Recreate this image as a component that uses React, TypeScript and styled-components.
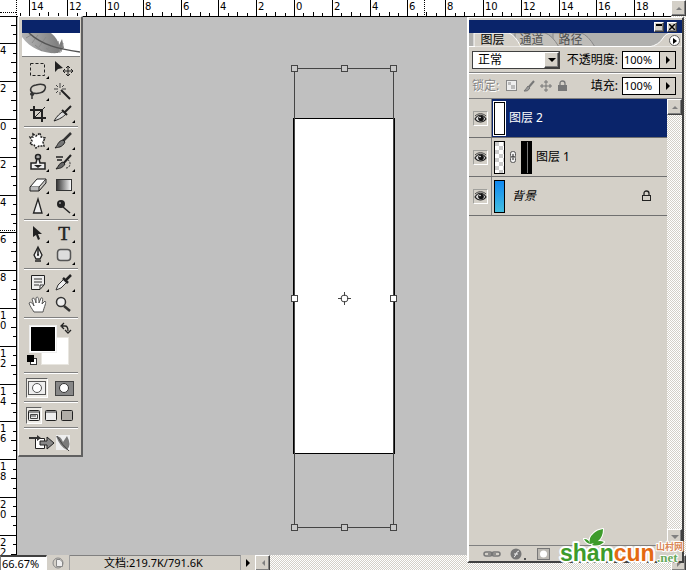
import React from "react";
import styled, { createGlobalStyle, css } from "styled-components";

const FACE = "#d4d0c8";
const NAVY = "#0a246a";
const FONT = `"Noto Sans", "Noto Sans CJK SC", sans-serif`;
const SCALE_FONT = `"DejaVu Sans", sans-serif`;
const UNIT = 18.9;

const GlobalStyle = createGlobalStyle`
  *, *::before, *::after { box-sizing: border-box; }
  html, body, #root { height: 100%; margin: 0; }
  body { background: #c0c0c0; color: #000; font: 11px/14px ${FONT}; overflow: hidden; }
  button, input, select { font: inherit; color: inherit; margin: 0; padding: 0; }
  svg { display: block; flex: none; }
`;

const dither = css`
  background: repeating-conic-gradient(#fff 0 25%, ${FACE} 0 50%) 0 0 / 2px 2px;
`;
const raised = css`
  background: ${FACE};
  border: 1px solid;
  border-color: #fff #404040 #404040 #fff;
  box-shadow: inset -1px -1px 0 #808080;
`;

/* ---------- window frame ---------- */

const Window = styled.div`
  position: relative;
  display: flex;
  flex-direction: column;
  height: 100vh;
  overflow: hidden;
`;
const Workspace = styled.div`
  flex: 1;
  min-height: 0;
  display: flex;
`;
const View = styled.div`
  flex: 1;
  min-width: 0;
  display: grid;
  grid-template: 17px minmax(0, 1fr) / 17px minmax(0, 1fr);
`;
const Corner = styled.div`
  position: relative;
  background: #fff;
  border-right: 1px dotted #000;
  border-bottom: 1px solid #000;
  &::after {
    content: "";
    position: absolute;
    left: 0;
    right: 0;
    top: 12px;
    border-top: 1px dotted #000;
  }
`;
const TopRuler = styled.div`
  background: #fff;
  border-bottom: 1px solid #000;
  overflow: hidden;
`;
const SideRuler = styled.div`
  background: #fff;
  border-right: 1px solid #000;
  overflow: hidden;
`;
const Canvas = styled.main`
  position: relative;
  background: #c0c0c0;
  overflow: hidden;
`;
const Document = styled.div`
  position: absolute;
  left: 276px;
  top: 101px;
  width: 102px;
  height: 336px;
  background: #fff;
  border: 1px solid #000;
`;
const TransformBox = styled.svg`
  position: absolute;
  left: 273px;
  top: 47px;
`;
const ScrollColumn = styled.div`
  width: 15px;
  ${dither}
`;
const ScrollButton = styled.button`
  ${raised}
  display: flex;
  flex: none;
  align-items: center;
  justify-content: center;
  width: 15px;
  height: 16px;
`;

/* ---------- status bar ---------- */

const StatusBar = styled.footer`
  display: flex;
  height: 15px;
  background: ${FACE};
`;
const ZoomInput = styled.input`
  flex: none;
  width: 47px;
  border: 1px solid #808080;
  border-right-color: #fff;
  border-top: 2px solid #404040;
  border-bottom: 0;
  background: #fff;
  padding-left: 1px;
`;
const StatusIcon = styled.div`
  display: flex;
  flex: none;
  align-items: center;
  justify-content: center;
  width: 23px;
  border-right: 1px solid #a0a0a0;
`;
const StatusText = styled.div`
  flex: none;
  width: 171px;
  padding-left: 34px;
  border-top: 1px solid #808080;
  border-right: 1px solid #a0a0a0;
  white-space: nowrap;
`;
const StatusArrow = styled.button`
  display: flex;
  flex: none;
  align-items: center;
  justify-content: center;
  width: 14px;
  border: 0;
  background: ${FACE};
`;
const ScrollTrack = styled.div`
  flex: 1;
  ${dither}
`;

/* ---------- toolbox ---------- */

const Toolbox = styled.aside`
  position: absolute;
  top: 16px;
  left: 18px;
  width: 65px;
  padding: 3px 1px 0 3px;
  background: ${FACE};
  border-style: solid;
  border-width: 1px 2px 2px 1px;
  border-color: #fff #606060 #606060 #fff;
`;
const ToolTitle = styled.div`
  height: 13px;
  background: ${NAVY};
`;
const Feather = styled.div`
  height: 24px;
  background: #fff;
  border-bottom: 1px solid #808080;
  overflow: hidden;
`;
const Group = styled.div`
  display: flex;
  flex-wrap: wrap;
  align-items: center;
  align-content: center;
  margin: 0 2px;
  padding: 2px 0 1px 1px;
  &:not(:last-child) {
    border-bottom: 1px solid #808080;
    box-shadow: 0 1px 0 #fff;
    margin-bottom: 1px;
  }
`;
const ToolButton = styled.button`
  width: 26px;
  height: 22px;
  border: 0;
  background: transparent;
`;
const SwatchGroup = styled(Group)`
  height: 54px;
`;
const ModeGroup = styled(Group)<{ $height: number }>`
  height: ${(p) => p.$height}px;
  justify-content: space-between;
  padding: 2px 3px 1px 2px;
`;
const ModeButton = styled.button<{ $active?: boolean; $small?: boolean }>`
  display: flex;
  align-items: center;
  justify-content: center;
  width: ${(p) => (p.$small ? 16 : 22)}px;
  height: ${(p) => (p.$small ? 17 : 20)}px;
  border: 1px solid;
  border-color: ${(p) => (p.$active ? "#606060 #fff #fff #606060" : "transparent")};
  background: ${(p) => (p.$active ? "#efede8" : "transparent")};
`;
const JumpButton = styled.button`
  height: 23px;
  width: 50px;
  padding-left: 4px;
  border: 0;
  background: transparent;
`;

/* ---------- layers panel ---------- */

const Panel = styled.aside`
  position: absolute;
  top: 17px;
  right: 2px;
  bottom: 7px;
  width: 217px;
  display: flex;
  flex-direction: column;
  background: ${FACE};
  border-style: solid;
  border-width: 1px 2px 2px 2px;
  border-color: #fff #404040 #404040 #fff;
`;
const PanelTitle = styled.header`
  display: flex;
  align-items: center;
  justify-content: flex-end;
  gap: 3px;
  height: 15px;
  padding-right: 5px;
  border-top: 2px solid ${FACE};
  background: ${NAVY};
`;
const CaptionButton = styled.button`
  ${raised}
  display: flex;
  align-items: center;
  justify-content: center;
  width: 10px;
  height: 10px;
`;
const Tabs = styled.nav`
  position: relative;
  height: 14px;
  background: #b0b0ae;
  overflow: hidden;
`;
const TabShapes = styled.svg`
  position: absolute;
  inset: 0;
  width: 100%;
`;
const TabRow = styled.div`
  position: relative;
  display: flex;
  gap: 14px;
  padding-left: 11px;
`;
const Tab = styled.button<{ $active?: boolean }>`
  width: 25px;
  height: 14px;
  border: 0;
  background: transparent;
  font-size: 12px;
  line-height: 14px;
  white-space: nowrap;
  color: ${(p) => (p.$active ? "#000" : "#505050")};
`;
const MenuButton = styled.button`
  display: flex;
  align-items: center;
  justify-content: center;
  width: 11px;
  height: 11px;
  margin: 2px 2px 0 auto;
  border: 1px solid #606060;
  border-radius: 50%;
  background: #fff;
`;
const OptionRow = styled.div`
  display: flex;
  align-items: center;
  height: 25px;
  padding: 0 6px 0 3px;
  font-size: 12px;
  & + & {
    height: 26px;
    border-top: 1px solid #808080;
    box-shadow: inset 0 1px 0 #fff;
  }
`;
const SelectWrap = styled.span`
  display: flex;
  width: 88px;
  height: 18px;
  border: 1px solid #404040;
  background: #fff;
`;
const BlendSelect = styled.select`
  flex: 1;
  min-width: 0;
  appearance: none;
  border: 0;
  background: transparent;
  padding-left: 5px;
  font-size: 12px;
  line-height: 16px;
`;
const DropArrow = styled.span`
  ${raised}
  display: flex;
  align-items: center;
  justify-content: center;
  width: 15px;
  pointer-events: none;
`;
const FieldLabel = styled.label`
  margin-left: auto;
  margin-right: 4px;
  white-space: nowrap;
`;
const LockLabel = styled.span`
  color: #858585;
  text-shadow: 1px 1px 0 #fff;
  margin-right: 7px;
`;
const LockIcons = styled.div`
  display: flex;
  gap: 5px;
`;
const LockButton = styled.button`
  width: 12px;
  height: 14px;
  border: 0;
  background: transparent;
`;
const Field = styled.span`
  display: flex;
  width: 54px;
  height: 18px;
  border: 1px solid #000;
`;
const PercentInput = styled.input`
  flex: 1;
  min-width: 0;
  border: 0;
  background: #fff;
  padding-left: 1px;
  font-size: 11px;
`;
const FieldArrow = styled.button`
  display: flex;
  align-items: center;
  justify-content: center;
  width: 16px;
  border: 0;
  border-left: 1px solid #000;
  background: ${FACE};
`;
const LayerArea = styled.div`
  flex: 1;
  min-height: 0;
  display: flex;
  border-top: 1px solid #808080;
`;
const LayerList = styled.ul`
  flex: 1;
  margin: 0;
  padding: 0;
  list-style: none;
`;
const LayerRow = styled.li<{ $selected?: boolean }>`
  display: flex;
  align-items: stretch;
  height: 39px;
  border-bottom: 1px solid #707070;
  background: ${(p) => (p.$selected ? NAVY : FACE)};
  color: ${(p) => (p.$selected ? "#fff" : "#000")};
`;
const EyeCell = styled.div`
  display: flex;
  align-items: center;
  justify-content: center;
  width: 23px;
  background: ${FACE};
  border-right: 1px solid #808080;
`;
const EyeButton = styled.button`
  display: flex;
  align-items: center;
  justify-content: center;
  width: 15px;
  height: 15px;
  border: 1px solid;
  border-color: #a0a09c #fff #fff #a0a09c;
  background: transparent;
`;
const LayerBody = styled.div`
  flex: 1;
  display: flex;
  align-items: center;
  gap: 4px;
  padding: 0 15px 0 2px;
`;
const fills = {
  white: "#fff",
  checker: "repeating-conic-gradient(#fff 0 25%, #ccc 0 50%) 0 0 / 8px 8px",
  mask: "linear-gradient(90deg, #000 5px, #777 5px 6px, #000 6px)",
  sky: "linear-gradient(#1088f0, #44bee0)",
};
const Thumb = styled.span<{ $fill: keyof typeof fills; $selected?: boolean }>`
  width: 11px;
  height: 33px;
  border: 1px solid #000;
  background: ${(p) => fills[p.$fill]};
  outline: ${(p) => (p.$selected ? "1px solid #fff" : "none")};
`;
const LayerName = styled.span<{ $italic?: boolean }>`
  flex: 1;
  padding-left: ${(p) => (p.$italic ? 3 : 0)}px;
  font-size: 12px;
  font-style: ${(p) => (p.$italic ? "italic" : "normal")};
`;
const PanelScroll = styled.div`
  display: flex;
  flex-direction: column;
  justify-content: space-between;
  width: 15px;
  ${dither}
`;
const PanelFooter = styled.footer`
  display: flex;
  align-items: center;
  gap: 11px;
  height: 16px;
  padding-left: 14px;
  border-top: 1px solid #808080;
`;
const FooterButton = styled.button`
  width: 16px;
  height: 14px;
  border: 0;
  background: transparent;
`;
const Watermark = styled.svg`
  position: absolute;
  right: 0;
  bottom: 2px;
`;

/* ---------- rulers ---------- */

const range = (from: number, to: number) =>
  Array.from({ length: to - from + 1 }, (_, i) => from + i);

/* One step is a quarter of a labelled division. */
function HorizontalScale() {
  const at = (step: number) => Math.round(277 + (step * UNIT) / 2);
  return (
    <svg width="1600" height="16" shapeRendering="crispEdges" fontSize="10" fontFamily={SCALE_FONT}>
      {range(-29, 120).map((s) => {
        const x = at(s);
        const major = s % 4 === 0;
        return (
          <g key={s}>
            <rect x={x} y={major ? 0 : s % 2 === 0 ? 12 : 13} width="1" height="16" />
            {major && <text x={x + 2} y="10">{Math.abs(s / 2)}</text>}
          </g>
        );
      })}
      <rect x="407" y="0" width="1" height="16" fill="#fff" />
      <path d="M407.500 0V16" stroke="#000" strokeDasharray="1 1" />
    </svg>
  );
}

function VerticalScale() {
  const at = (step: number) => Math.round(102 + (step * UNIT) / 2);
  return (
    <svg width="16" height="1200" shapeRendering="crispEdges" fontSize="10" fontFamily={SCALE_FONT}>
      {range(-10, 110).map((s) => {
        const y = at(s);
        const major = s % 4 === 0;
        return (
          <g key={s}>
            <rect x={major ? 0 : s % 2 === 0 ? 11 : 13} y={y} width="16" height="1" />
            {major &&
              String(Math.abs(s / 2))
                .split("")
                .map((d, i) => (
                  <text key={i} x="0" y={y + 11 + i * 10}>{d}</text>
                ))}
          </g>
        );
      })}
      <path d="M0 213.500H16" stroke="#000" strokeDasharray="1 1" />
    </svg>
  );
}

/* ---------- icons ---------- */

const Arrow = ({ dir = "right", color = "#000" }: { dir?: "right" | "left" | "up" | "down"; color?: string }) => {
  const d = {
    right: "M2 0L6 4L2 8Z",
    left: "M6 1L3 4L6 7Z",
    up: "M1 6L4 3L7 6Z",
    down: "M0 2L4 6L8 2Z",
  }[dir];
  return (
    <svg width="8" height="8"><path d={d} fill={color} /></svg>
  );
};

const toolGroups: { name: string; more?: boolean; art: React.ReactNode }[][] = [
  [
    { name: "矩形选框", more: true, art: <rect x="5.500" y="4.500" width="14" height="12" fill="none" stroke="#222" strokeDasharray="3 2" /> },
    { name: "移动", art: <><path d="M4 2V13L7 10L12 9Z" fill="#222" /><path d="M17 7V17M12 12H22M15 9L17 7L19 9M15 15L17 17L19 15M14 10L12 12L14 14M20 10L22 12L20 14" stroke="#222" fill="none" /></> },
    { name: "套索", more: true, art: <path d="M8 12C4 10 5 5 11 4C17 2 22 4 20 8C19 12 12 13 8 12C5 11 5 15 8 14C10 12 7 11 7 15V18" fill="none" stroke="#333" strokeWidth="1.500" /> },
    { name: "魔棒", art: <><path d="M10 9L19 18" stroke="#222" strokeWidth="2" /><path d="M9 2V7M9 11V14M3 8H7M11 8H15M5 4L7 6M13 4L11 6M5 12L7 10" stroke="#444" /></> },
    { name: "裁剪", art: <><path d="M9 3V15H21M5 7H17V19" fill="none" stroke="#222" strokeWidth="2" /><path d="M8 16L20 4" stroke="#222" /></> },
    { name: "切片", more: true, art: <><path d="M3 18C6 13 9 10 13 8L15 11C12 14 9 16 3 18Z" fill="#ddd" stroke="#222" /><path d="M11 7L16 12M14 9L20 3" stroke="#222" strokeWidth="2" /></> },
  ],
  [
    { name: "修补", more: true, art: <path d="M8 4L11 6L15 3L16 7L20 8L18 12L19 16L14 16L11 18L9 15L5 14L7 11L5 7L8 7Z" fill="#fff" stroke="#222" strokeWidth="1.500" strokeDasharray="2 1" /> },
    { name: "画笔", more: true, art: <><path d="M11 12L20 3" stroke="#333" strokeWidth="2.500" /><path d="M12 10L14 12C11 18 7 17 4 18C7 15 7 11 12 10Z" fill="#777" stroke="#222" /></> },
    { name: "图章", more: true, art: <><circle cx="13" cy="5" r="2.500" fill="#aaa" stroke="#222" strokeWidth="1.500" /><path d="M12 7H14L15 11H20V17H6V11H11Z" fill="#eee" stroke="#222" strokeWidth="1.500" /><path d="M9 13H17L13 16Z" fill="#222" /></> },
    { name: "历史画笔", more: true, art: <><path d="M11 13L20 3" stroke="#222" strokeWidth="2" /><path d="M5 5H12M6 8H11" stroke="#222" strokeWidth="1.500" /><path d="M12 10L14 12C11 17 8 16 5 17C8 14 8 11 12 10Z" fill="#666" stroke="#222" /><path d="M15 16C20 16 20 9 17 8" fill="none" stroke="#333" strokeDasharray="2 1" /></> },
    { name: "橡皮擦", more: true, art: <><path d="M5 13L12 5H21L14 13Z" fill="#fff" stroke="#222" /><path d="M5 13V17H14V13M14 17L21 9V5" fill="#bbb" stroke="#222" /></> },
    { name: "渐变", more: true, art: <><defs><linearGradient id="toolGradient"><stop stopColor="#333" /><stop offset="1" stopColor="#fff" /></linearGradient></defs><rect x="5.500" y="5.500" width="15" height="11" fill="url(#toolGradient)" stroke="#333" /></> },
    { name: "锐化", more: true, art: <path d="M13 3L17 17H8.500Z" fill="#eee" stroke="#222" strokeWidth="1.300" /> },
    { name: "减淡", more: true, art: <><path d="M12 11L19 17" stroke="#222" strokeWidth="1.500" /><circle cx="10" cy="8" r="4" fill="#222" /><circle cx="9" cy="7" r="1" fill="#999" /></> },
  ],
  [
    { name: "路径选择", more: true, art: <path d="M8 3V14L11 12L13 17L15 16L13 11H17Z" fill="#222" /> },
    { name: "文字", more: true, art: <text x="13" y="17" textAnchor="middle" fontFamily="Liberation Serif, serif" fontSize="19" stroke="#222" strokeWidth="0.500" fill="#222">T</text> },
    { name: "钢笔", more: true, art: <><path d="M13 2L17 10L15 14H11L9 10Z" fill="#eee" stroke="#222" strokeWidth="1.300" /><path d="M13 3V10M10 16H16" stroke="#222" strokeWidth="1.500" /><circle cx="13" cy="10" r="1" fill="#222" /></> },
    { name: "圆角矩形", more: true, art: <rect x="6.500" y="4.500" width="13" height="11" rx="3" fill="#ddd" stroke="#555" strokeWidth="1.500" /> },
  ],
  [
    { name: "注释", more: true, art: <><path d="M6.500 3.500H19.500V12.500L15 17.500H6.500Z" fill="#eee" stroke="#222" /><path d="M9 7H17M9 10H17M9 13H14M15 17V13H19" stroke="#333" fill="none" /></> },
    { name: "吸管", more: true, art: <><path d="M5 18L7 13L13 7L16 10L10 16Z" fill="#eee" stroke="#333" /><path d="M12 6L17 11M14 9L20 3" stroke="#222" strokeWidth="2.500" /></> },
    { name: "抓手", art: <path d="M9 18C7 15 5 12 4 9C6 7 8 10 9 12L7 5C8 3 10 4 11 9L11 4C12 2 14 3 14 9L16 4C18 3 18 5 17 10L20 7C22 8 19 13 18 18Z" fill="#fff" stroke="#555" /> },
    { name: "缩放", art: <><path d="M13 12L19 17" stroke="#333" strokeWidth="2.500" /><circle cx="10" cy="8" r="4.500" fill="#eee" stroke="#333" strokeWidth="1.500" /></> },
  ],
];

const FeatherArt = () => (
  <svg width="58" height="23">
    <defs><linearGradient id="feather"><stop stopColor="#b4b4b4" /><stop offset="1" stopColor="#777" /></linearGradient></defs>
    <path d="M0 0H29C34 4 36 8 37 12L40 6L42 15L36 20C25 21 9 17 0 4Z" fill="url(#feather)" />
    <path d="M4 5L9 2M10 10L16 2M17 14L24 4M25 17L31 8M30 20L24 15M20 18L13 12M36 8L38 20M41 10L39 19" stroke="#8a8a8a" />
    <path d="M7 0C20 12 36 16 58 19" fill="none" stroke="#555" strokeWidth="1.500" />
  </svg>
);

const Swatches = () => (
  <svg width="50" height="50" aria-label="前景色和背景色">
    <rect x="16.500" y="16.500" width="27" height="27" fill="#fff" stroke="#e8e6e0" />
    <rect x="4.500" y="4.500" width="27" height="27" fill="#fff" stroke="#eee" />
    <rect x="6" y="6" width="24" height="24" />
    <path d="M37 5H40Q43 5 43 10M39 2L36 5L39 8M40 9L43 12L46 9" fill="none" stroke="#222" strokeWidth="1.300" />
    <rect x="5.500" y="37.500" width="6" height="6" fill="#fff" stroke="#333" />
    <rect x="2" y="34" width="7" height="7" />
  </svg>
);

const ScreenArt = ({ kind }: { kind: number }) => (
  <svg width="12" height="11">
    <rect x="0.500" y="0.500" width="11" height="10" rx="1" fill={kind === 2 ? "#b0ada7" : "#eee"} stroke="#222" />
    {kind < 2 && <path d="M1 2H11" stroke="#333" />}
    {kind === 0 && <path d="M2.500 4.500H9.500V8.500H2.500ZM3 6H8" stroke="#444" fill="none" />}
  </svg>
);

const Eye = () => (
  <svg width="13" height="11">
    <path d="M1 6C4 1 9 1 12 6C9 10 4 10 1 6Z" fill="#ddd" stroke="#222" strokeWidth="1.200" />
    <circle cx="7" cy="5.500" r="2.800" fill="#111" />
    <circle cx="6" cy="4.500" r="0.800" fill="#fff" />
    <path d="M1 3C4 0 9 0 12 3" fill="none" stroke="#444" />
  </svg>
);

const LockArt = ({ solid }: { solid?: boolean }) => (
  <svg width="11" height="12">
    <path d="M3 6V3.500Q3 1 5.500 1T8 3.500V6" fill="none" stroke={solid ? "#777" : "#222"} strokeWidth="1.300" />
    <rect x="1.500" y="5.500" width="8" height="5" fill={solid ? "#777" : "#d4d0c8"} stroke={solid ? "#777" : "#222"} />
  </svg>
);

const ChainArt = () => (
  <svg width="8" height="14">
    <rect x="1.500" y="1.500" width="5" height="6" rx="2" fill="#eee" stroke="#555" />
    <rect x="1.500" y="6.500" width="5" height="6" rx="2" fill="#eee" stroke="#555" />
    <path d="M4 4V10" stroke="#222" />
  </svg>
);

const handles = [[4, 4], [54, 4], [103, 4], [4, 234], [103, 234], [4, 463], [54, 463], [103, 463]];

const layers = [
  { name: "图层 2", fill: "white" as const, selected: true },
  { name: "图层 1", fill: "checker" as const, mask: true },
  { name: "背景", fill: "sky" as const, locked: true },
];

export default function App() {
  return (
    <Window>
      <GlobalStyle />
      <Workspace>
        <View>
          <Corner />
          <TopRuler><HorizontalScale /></TopRuler>
          <SideRuler><VerticalScale /></SideRuler>
          <Canvas>
            <Document />
            <TransformBox width="108" height="468" fill="none" stroke="#444" shapeRendering="crispEdges">
              <rect x="4.500" y="4.500" width="99" height="459" />
              {handles.map(([x, y]) => (
                <rect key={`${x}-${y}`} x={x - 2.5} y={y - 2.5} width="6" height="6" fill={y === 234 ? "#fff" : "#c8c8c8"} />
              ))}
              <g shapeRendering="auto">
                <circle cx="54.500" cy="234.500" r="3.500" />
                <path d="M54.500 228V232M54.500 237V241M48 234.500H52M57 234.500H61" />
              </g>
            </TransformBox>
          </Canvas>
        </View>
        <ScrollColumn>
          <ScrollButton aria-label="向上滚动"><Arrow dir="up" color="#808080" /></ScrollButton>
        </ScrollColumn>
      </Workspace>

      <StatusBar>
        <ZoomInput aria-label="缩放比例" defaultValue="66.67%" />
        <StatusIcon>
          <svg width="12" height="12" fill="none" stroke="#888">
            <circle cx="6" cy="6" r="5" />
            <path d="M4.500 2.500H8L10.500 5V9.500H4.500Z" fill="#eee" />
          </svg>
        </StatusIcon>
        <StatusText>文档:219.7K/791.6K</StatusText>
        <StatusArrow aria-label="状态选项"><Arrow /></StatusArrow>
        <ScrollButton aria-label="向左滚动"><Arrow dir="left" color="#808080" /></ScrollButton>
        <ScrollTrack />
        <ScrollButton aria-label="向右滚动"><Arrow color="#808080" /></ScrollButton>
      </StatusBar>

      <Toolbox aria-label="工具">
        <ToolTitle />
        <Feather><FeatherArt /></Feather>
        {toolGroups.map((group, i) => (
          <Group key={i}>
            {group.map((tool) => (
              <ToolButton key={tool.name} aria-label={tool.name}>
                <svg width="26" height="22">
                  {tool.art}
                  {tool.more && <path d="M24 17V20H21Z" />}
                </svg>
              </ToolButton>
            ))}
          </Group>
        ))}
        <SwatchGroup><Swatches /></SwatchGroup>
        <ModeGroup $height={28}>
          <ModeButton $active aria-label="标准模式">
            <svg width="18" height="14"><rect x="0.500" y="0.500" width="17" height="13" fill="#eee" stroke="#555" /><circle cx="9" cy="7" r="4.500" fill="#fff" stroke="#555" /></svg>
          </ModeButton>
          <ModeButton aria-label="快速蒙版">
            <svg width="19" height="15"><rect x="0.500" y="0.500" width="18" height="14" fill="#888" stroke="#444" /><circle cx="9" cy="7" r="4.500" fill="#fff" stroke="#333" /></svg>
          </ModeButton>
        </ModeGroup>
        <ModeGroup $height={25}>
          {["标准屏幕", "带菜单全屏", "全屏"].map((name, i) => (
            <ModeButton key={name} $small $active={i === 0} aria-label={name}><ScreenArt kind={i} /></ModeButton>
          ))}
        </ModeGroup>
        <Group>
          <JumpButton aria-label="跳转到 ImageReady">
            <svg width="44" height="20">
              <path d="M6.500 5.500H15.500V15.500H6.500Z" fill="#fff" stroke="#222" />
              <path d="M0 4H8V2L12 5L8 8V6H0Z" fill="#333" />
              <path d="M11 8H18V4L25 10L18 16V12H11Z" fill="#888" stroke="#222" />
              <rect x="27" y="2" width="14" height="15" fill="#eee" />
              <path d="M27 3Q32 3 34 9L38 3Q43 12 38 17Q31 14 27 3Z" fill="#7b7b7b" />
              <path d="M28 3Q33 12 40 18" stroke="#444" fill="none" />
            </svg>
          </JumpButton>
        </Group>
      </Toolbox>

      <Panel aria-label="图层面板">
        <PanelTitle>
          <CaptionButton aria-label="最小化"><svg width="6" height="6"><path d="M0 1H6" stroke="#000" strokeWidth="2" /></svg></CaptionButton>
          <CaptionButton aria-label="关闭"><svg width="6" height="6"><path d="M0 0L6 6M6 0L0 6" stroke="#000" strokeWidth="1.500" /></svg></CaptionButton>
        </PanelTitle>
        <Tabs>
          <TabShapes height="14" viewBox="0 0 213 14" preserveAspectRatio="xMaxYMid slice">
            <path d="M84 0H112Q119 2 126 14H84Z" fill="#bebcb8" stroke="#888" />
            <path d="M46 0H76Q83 2 90 14H46Z" fill="#c2c0bb" stroke="#888" />
            <path d="M5 14V0H40Q46 2 52 14Z" fill={FACE} stroke="#fff" />
            <path d="M180 14Q190 12 194 5Q197 0 203 0H213V14Z" fill={FACE} stroke="#fff" />
            <path d="M0 13.500H6M52 13.500H182" stroke="#fff" />
          </TabShapes>
          <TabRow>
            <Tab $active>图层</Tab>
            <Tab>通道</Tab>
            <Tab>路径</Tab>
            <MenuButton aria-label="面板菜单"><svg width="5" height="6"><path d="M1 0L5 3L1 6Z" /></svg></MenuButton>
          </TabRow>
        </Tabs>
        <OptionRow>
          <SelectWrap>
            <BlendSelect aria-label="混合模式"><option>正常</option></BlendSelect>
            <DropArrow><Arrow dir="down" /></DropArrow>
          </SelectWrap>
          <FieldLabel htmlFor="opacity">不透明度:</FieldLabel>
          <Field>
            <PercentInput id="opacity" defaultValue="100%" />
            <FieldArrow aria-label="调整不透明度"><Arrow /></FieldArrow>
          </Field>
        </OptionRow>
        <OptionRow>
          <LockLabel>锁定:</LockLabel>
          <LockIcons>
            <LockButton aria-label="锁定透明像素"><svg width="12" height="12"><rect x="0.500" y="0.500" width="10" height="10" fill="#eee" stroke="#888" /><path d="M2 2H5V5H2ZM5 5H9V9H5Z" fill="#bbb" /></svg></LockButton>
            <LockButton aria-label="锁定图像像素"><svg width="12" height="12"><path d="M5 8L11 1" stroke="#777" strokeWidth="2" /><path d="M5 6L7 8Q5 12 1 11Q3 9 5 6Z" fill="#999" stroke="#777" /></svg></LockButton>
            <LockButton aria-label="锁定位置"><svg width="12" height="12"><path d="M6 0V12M0 6H12M4 2H8M4 10H8M2 4V8M10 4V8" stroke="#777" /></svg></LockButton>
            <LockButton aria-label="锁定全部"><LockArt solid /></LockButton>
          </LockIcons>
          <FieldLabel htmlFor="fill">填充:</FieldLabel>
          <Field>
            <PercentInput id="fill" defaultValue="100%" />
            <FieldArrow aria-label="调整填充"><Arrow /></FieldArrow>
          </Field>
        </OptionRow>
        <LayerArea>
          <LayerList>
            {layers.map((l) => (
              <LayerRow key={l.name} $selected={l.selected}>
                <EyeCell><EyeButton aria-label={`显示 ${l.name}`}><Eye /></EyeButton></EyeCell>
                <LayerBody>
                  <Thumb $fill={l.fill} $selected={l.selected} />
                  {l.mask && <><ChainArt /><Thumb $fill="mask" /></>}
                  <LayerName $italic={l.locked}>{l.name}</LayerName>
                  {l.locked && <LockArt />}
                </LayerBody>
              </LayerRow>
            ))}
          </LayerList>
          <PanelScroll>
            <ScrollButton aria-label="图层向上"><Arrow dir="up" color="#808080" /></ScrollButton>
            <ScrollButton aria-label="图层向下"><Arrow dir="down" color="#808080" /></ScrollButton>
          </PanelScroll>
        </LayerArea>
        <PanelFooter>
          <FooterButton aria-label="链接图层"><svg width="18" height="14" fill="none" stroke="#777" strokeWidth="1.500"><rect x="1" y="5" width="8" height="4" rx="2" /><rect x="9" y="5" width="8" height="4" rx="2" /><path d="M5 7H13" /></svg></FooterButton>
          <FooterButton aria-label="图层样式"><svg width="16" height="14"><circle cx="6" cy="7" r="5.500" fill="#777" /><path d="M4 10Q5 10 6 7T9 4M4 7H8" stroke="#eee" fill="none" /><rect x="14" y="11" width="2" height="2" fill="#555" /></svg></FooterButton>
          <FooterButton aria-label="添加蒙版"><svg width="14" height="14"><rect x="0.500" y="1.500" width="12" height="11" fill="#bbb8b2" stroke="#777" /><circle cx="6.500" cy="7" r="3.500" fill="#fff" /></svg></FooterButton>
        </PanelFooter>
      </Panel>

      <Watermark width="128" height="42" fontWeight="bold" stroke="#fff" strokeWidth="4" strokeLinejoin="round" paintOrder="stroke">
        <text x="2" y="35" fontSize="23" fontFamily="Liberation Sans Narrow, Liberation Sans, sans-serif">
          <tspan fill="#3d9b2b">shan</tspan><tspan fill="#e46a12">cun</tspan>
        </text>
        <path d="M32 18Q30 12 36 7Q39 4 45 3Q45 11 40 15Q36 18 32 18ZM34 19Q39 13 46 16Q41 21 34 19ZM32 18Q28 17 26 13Q31 13 32 18Z" fill="#3d9b2b" strokeWidth="2" />
        <g strokeWidth="2">
          <text x="98" y="24" fontSize="9" fill="#d98555" fontFamily="Noto Sans CJK SC, sans-serif">山村网</text>
          <text x="99" y="36" fontSize="13" fill="#68a95c" fontFamily="Liberation Serif, serif">.net</text>
        </g>
      </Watermark>
    </Window>
  );
}
